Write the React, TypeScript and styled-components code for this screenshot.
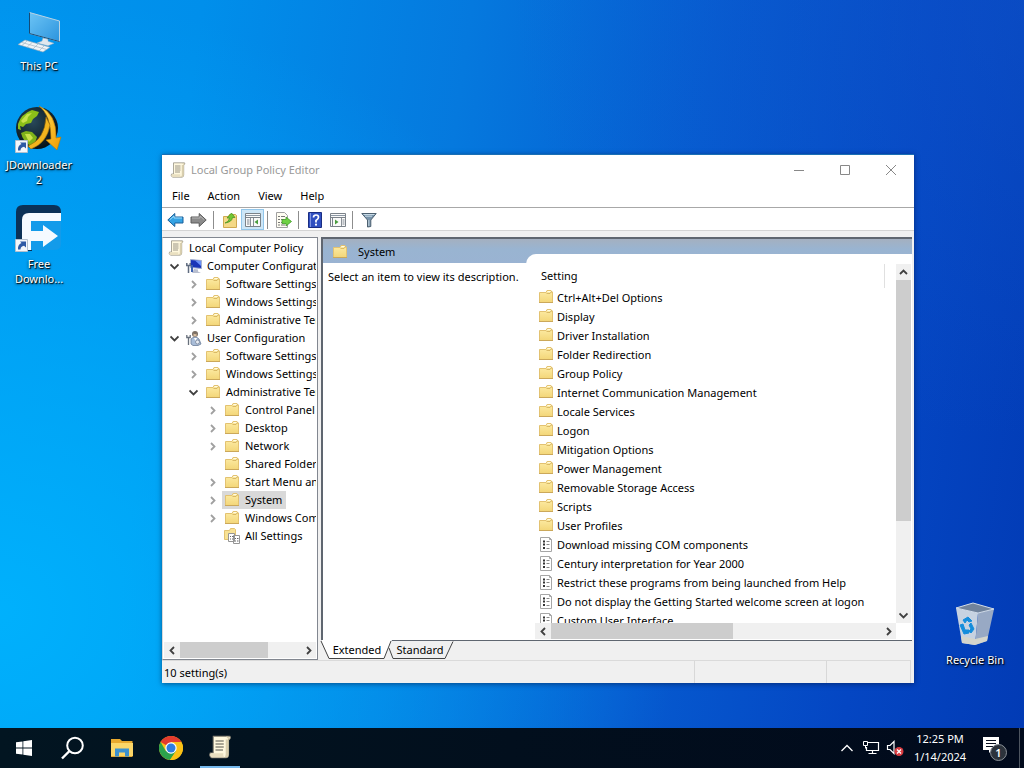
import React from "react";
import styled, { createGlobalStyle, css } from "styled-components";

const GlobalStyle = createGlobalStyle`
  * { box-sizing: border-box; }
  body { margin: 0; }
  body, button, table {
    font-family: "Noto Sans", "Open Sans", sans-serif;
    font-size: 11px;
    line-height: 18px;
    color: #000;
  }
  button { border: 0; padding: 0; margin: 0; background: none; }
  ul { list-style: none; margin: 0; padding: 0; }
  svg { display: block; flex: none; }
`;

/* ---------- desktop ---------- */

const Screen = styled.div`
  display: flex;
  flex-direction: column;
  height: 100vh;
  min-height: 480px;
  overflow: hidden;
`;

const Desktop = styled.main`
  position: relative;
  flex: 1;
  min-height: 0;
  background:
    radial-gradient(ellipse 66% 85% at 0% 84%, rgba(0, 182, 255, 0.85), rgba(0, 170, 250, 0) 100%),
    radial-gradient(ellipse 50% 60% at 100% 0%, rgba(20, 90, 205, 0.4), rgba(20, 90, 205, 0) 100%),
    linear-gradient(98deg, #0094ee 0%, #008feb 18%, #0579de 42%, #065bd0 64%, #0446c3 84%, #023bb5 100%);
`;

const Shortcuts = styled.div`
  display: flex;
  flex-direction: column;
  width: 78px;
`;

const Shortcut = styled.button`
  display: flex;
  flex-direction: column;
  align-items: center;
  gap: 4px;
  width: 78px;
  height: 99px;
  padding-top: 6px;
  color: #fff;
  line-height: 15px;
  text-shadow: 1px 1px 1px #000, 0 1px 3px rgba(0, 0, 0, 0.8);
`;

const BinSpot = styled.div`
  position: absolute;
  right: 10px;
  bottom: 35px;
`;

/* ---------- window ---------- */

const Window = styled.section`
  position: absolute;
  top: 154px;
  right: 110px;
  bottom: 45px;
  left: 162px;
  display: flex;
  flex-direction: column;
  background: #f0f0f0;
  border-top: 1px solid #1a6fb4;
  box-shadow: 0 1px 5px rgba(0, 20, 60, 0.55);
`;

const TitleBar = styled.header`
  display: flex;
  align-items: center;
  height: 30px;
  padding-left: 8px;
  background: #fff;
`;

const Title = styled.h1`
  flex: 1;
  margin: 0 0 0 5px;
  font-size: 11px;
  font-weight: 400;
  color: #999;
`;

const CaptionButton = styled.button`
  display: grid;
  place-items: center;
  width: 46px;
  height: 30px;
`;

const MenuBar = styled.nav`
  display: flex;
  gap: 18px;
  height: 23px;
  padding: 2px 10px 2px;
  background: #fff;
  border-bottom: 1px solid #a8a8a8;
`;

const ToolBar = styled.div`
  display: flex;
  align-items: flex-end;
  height: 23px;
  padding-left: 2px;
  background: #fff;
  border-bottom: 1px solid #d4d4d4;
`;

const Tool = styled.button<{ $on?: boolean }>`
  display: grid;
  place-items: center;
  width: 23px;
  height: 21px;
  padding-top: 1px;
  ${(p) => p.$on && css`
    background: #cde6f7;
    border: 1px solid #92c6ea;
  `}
`;

const ToolRule = styled.span`
  width: 1px;
  height: 18px;
  margin: 0 4px 1px 3px;
  background: #8d8d8d;
`;

const Panes = styled.div`
  display: grid;
  grid-template-columns: 156px minmax(0, 1fr);
  gap: 3px;
  flex: 1;
  min-height: 0;
  padding: 6px 2px 0 0;
`;

const TreePane = styled.div`
  display: flex;
  flex-direction: column;
  min-height: 0;
  padding: 0 1px 1px;
  background: #fff;
  border: 1px solid #828790;
  border-left-color: #d8d8d8;
`;

const Tree = styled.ul`
  flex: 1;
  min-height: 0;
  overflow: hidden;
  padding-top: 1px;
`;

const Branch = styled.li<{ $depth: number }>`
  display: flex;
  align-items: center;
  height: 18px;
  padding-left: ${(p) => Math.max(0, p.$depth * 19 - 17)}px;
  white-space: nowrap;
`;

const Twisty = styled.span`
  display: grid;
  flex: none;
  place-items: center;
  width: 16px;
  height: 18px;
`;

const Node = styled.button<{ $selected?: boolean }>`
  display: flex;
  flex: none;
  align-items: center;
  gap: 5px;
  height: 18px;
  margin-left: 2px;
  padding: 0 4px 0 2px;
  white-space: nowrap;
  background: ${(p) => (p.$selected ? "#d9d9d9" : "transparent")};
`;

const RightSide = styled.div`
  display: flex;
  flex-direction: column;
  min-width: 0;
  min-height: 0;
`;

const ResultPane = styled.div`
  display: grid;
  grid-template-columns: 203px minmax(0, 1fr);
  flex: 1;
  min-height: 0;
  border: solid #5f6670;
  border-width: 2px 0 1px 2px;
  background: linear-gradient(#a4b0c0, #99b4d1 10px, #9ab3d2) top / 100% 24px no-repeat #fff;
`;

const Heading = styled.h2`
  display: flex;
  align-items: center;
  gap: 10px;
  height: 24px;
  margin: 0;
  padding: 2px 0 0 9px;
  font-size: 11px;
  font-weight: 400;
`;

const Hint = styled.p`
  margin: 5px 0 0 5px;
  white-space: nowrap;
`;

const Sheet = styled.div`
  display: grid;
  grid-template-columns: minmax(0, 1fr) 15px;
  grid-template-rows: minmax(0, 1fr) 16px;
  min-height: 0;
  margin-top: 15px;
  padding: 10px 1px 1px 9px;
  border-top-left-radius: 10px;
  background: #fff;
`;

const ListView = styled.div`
  overflow: hidden;
  margin-right: 2px;
`;

const Settings = styled.table`
  width: 100%;
  border-collapse: collapse;
  white-space: nowrap;

  th {
    height: 24px;
    padding: 0 0 0 6px;
    font-weight: 400;
    text-align: left;
  }
  td { height: 19px; padding: 0 0 0 3px; }
`;

const HeaderCell = styled.div`
  height: 24px;
  margin-right: 9px;
  padding-top: 3px;
  border-right: 1px solid #e0e0e0;
`;

const SettingName = styled.div`
  display: flex;
  align-items: center;
  gap: 3px;
  height: 19px;

  svg { margin-bottom: 1px; }
`;

/* ---------- scroll bars ---------- */

const Bar = styled.div<{ $vertical?: boolean }>`
  display: flex;
  flex: none;
  flex-direction: ${(p) => (p.$vertical ? "column" : "row")};
  align-items: stretch;
  min-width: 0;
  min-height: 0;
  ${(p) => !p.$vertical && "height: 16px;"}
  background: #f0f0f0;
`;

const BarButton = styled.button`
  display: grid;
  place-items: center;
  min-width: 15px;
  width: auto;
  flex: 0 0 16px;
`;

const Thumb = styled.div<{ $share: number }>`
  flex: ${(p) => p.$share} 0 0;
  background: #cdcdcd;
`;

const Track = styled.div<{ $share: number }>`
  flex: ${(p) => p.$share} 0 0;
`;

/* ---------- tabs and status ---------- */

const Tabs = styled.div`
  display: flex;
  height: 19px;
`;

const Tab = styled.button<{ $active?: boolean }>`
  position: relative;
  width: ${(p) => (p.$active ? 70 : 64)}px;
  height: 18px;
  padding-left: ${(p) => (p.$active ? 2 : 0)}px;
  padding-right: ${(p) => (p.$active ? 0 : 6)}px;
  line-height: 18px;
  text-align: center;

  svg { position: absolute; top: 0; left: 0; overflow: visible; }
  span { position: relative; }
`;

const StatusBar = styled.footer`
  display: grid;
  grid-template-columns: minmax(0, 1fr) 132px 84px;
  height: 23px;
  margin-right: 3px;
  border-top: 1px solid #dadada;

  > * {
    padding: 3px 0 0 2px;
    border-right: 1px solid #d8d8d8;
  }
`;

/* ---------- task bar ---------- */

const TaskBar = styled.footer`
  display: flex;
  flex: none;
  gap: 1px;
  height: 40px;
  background: linear-gradient(90deg, #021521, #020f1d 50%, #010a1c);
`;

const TaskButton = styled.button<{ $open?: boolean }>`
  display: grid;
  place-items: center;
  width: ${(p) => (p.$open ? 40 : 48)}px;
  height: 40px;
  margin: ${(p) => (p.$open ? "0 4px" : "0")};
  border-bottom: ${(p) => (p.$open ? "2px solid #76b9ed" : "0")};
`;

const TaskSpacer = styled.div`
  flex: 1;
`;

const Tray = styled.div`
  display: flex;
`;

const TrayButton = styled.button`
  display: grid;
  place-items: center;
  width: 24px;
  height: 40px;
`;

const Clock = styled.button`
  width: 66px;
  height: 40px;
  color: #fff;
  text-align: center;
  line-height: 18px;
`;

const Notice = styled(TrayButton)`
  width: 47px;
  border-right: 1px solid #4d5560;
  margin-right: 4px;
`;

/* ---------- drawings ---------- */

const Folder = () => (
  <svg width="16" height="16" viewBox="0 0 16 16">
    <defs>
      <linearGradient id="manila" x1="0" y1="0" x2="0" y2="1">
        <stop offset="0" stopColor="#fdeca6" /><stop offset="1" stopColor="#f3d678" />
      </linearGradient>
    </defs>
    <path d="M1.500 3.500h6.500l1-2h4l1 1.500h.5v10.500h-13z" fill="url(#manila)" stroke="#e3c271" />
    <path d="M8.500 4.500h3.500l1-1.500h1" stroke="#cba650" strokeWidth=".7" fill="none" />
    <path d="M9.500 2.500h3" stroke="#fffbe6" />
    <path d="M1 13.500h14" stroke="#cba85a" />
  </svg>
);

const Scroll = ({ size = 16 }: { size?: number }) => (
  <svg width={size} height={size} viewBox="0 0 16 16">
    <path d="M3.500.8h11q1.200 1.400-.8 2.200V13q0 2-1.700 2.200H2.500Q.5 14 1.500 12h2z" fill="#fff8de" stroke="#8a8577" strokeWidth=".7" />
    <path d="M12 1q3-.2 2.500 2h-2.700v10q0 1.800-1.500 2h2q1.500-.3 1.500-2V3" fill="#d9cfae" />
    <path d="M1.800 12.200h8.500q-.5 2.300 1 2.800H2.500Q1 14 1.800 12.200z" fill="#e9dfc0" />
    <path d="M5 4h5.500M5 6h5.500M5 8h5.500M5 10h5" stroke="#8f8a7e" strokeWidth=".9" />
  </svg>
);

const Page = () => (
  <svg width="16" height="16" viewBox="0 0 16 16">
    <path d="M2.500 1.500h9l2 2v12h-11z" fill="#fff" stroke="#a6a6a6" />
    <path d="M11.500 1.500v2h2" fill="none" stroke="#a6a6a6" />
    <path d="M5 5.500h2M5 8.500h2M5 12h2" stroke="#333" strokeWidth="2" />
    <path d="M8.500 5.500h3M8.500 8.500h3M8.500 12.500h3" stroke="#888" />
  </svg>
);

const AllSettings = () => (
  <svg width="16" height="16" viewBox="0 0 16 16">
    <path d="M.5 2.500h5l1-2h4l1 1v10h-11z" fill="#f8e294" stroke="#e3c271" />
    <path d="M4.500 5.500h6v8h-6zM9.500 7.500h6v8h-6z" fill="#fff" stroke="#959595" />
    <path d="M11 10.500h1M13 10.500h1.500M11 13h1M13 13h1.500M6 8.500h1M8 8.500h1.500M6 11h1M8 11h1" stroke="#666" />
  </svg>
);

const ComputerNode = () => (
  <svg width="16" height="16" viewBox="0 0 16 16">
    <path d="M4.500 1.500l11 1v8l-11-1z" fill="#1a35b8" stroke="#a5b0d0" />
    <path d="M9 2.500l6 .5v5z" fill="#6b91f8" />
    <path d="M8 11l4 .5v2l3 1.500H6z" fill="#b9bfd0" />
    <path d="M2.500 7v8M.8 5v2.500h3.400V5" stroke="#606c80" strokeWidth="1.500" fill="none" />
    <path d="M6 7v7" stroke="#3d62b2" strokeWidth="2" />
  </svg>
);

const UserNode = () => (
  <svg width="16" height="16" viewBox="0 0 16 16">
    <circle cx="9" cy="4" r="3" fill="#7b6f64" />
    <path d="M7.500 3.500q2 1.500 3 0v3h-3z" fill="#dbc0a0" />
    <path d="M5 14V9q4-4 8 0l2 5-3 1.500H7z" fill="#a9bdd8" stroke="#6c7d99" strokeWidth=".8" />
    <path d="M8 8l1.500 3L11 8" fill="#fff" />
    <path d="M2.500 7v8M.8 5v2.500h3.400V5" stroke="#68707c" strokeWidth="1.300" fill="none" />
    <circle cx="11.500" cy="12" r="2" fill="#e8edf5" stroke="#7b8799" strokeWidth=".8" />
  </svg>
);

const arrows = {
  left: "M6 1L2.500 4.500L6 8",
  right: "M3 1l3.500 3.500L3 8",
  up: "M1 6l3.500-3.500L8 6",
  down: "M.5 2.500l4 4 4-4",
};

const Chevron = ({ to, color = "#404040" }: { to: keyof typeof arrows; color?: string }) => (
  <svg width="9" height="9" viewBox="0 0 9 9">
    <path d={arrows[to]} fill="none" stroke={color} strokeWidth="1.800" />
  </svg>
);

const Arrow = ({ back }: { back?: boolean }) => (
  <svg width="17" height="16" viewBox="0 0 17 16">
    {back ? (
      <path d="M.8 8l7-6.500V5H16v6H7.800v3.500z" fill="#35a3e4" stroke="#1b5f99" />
    ) : (
      <path d="M16.200 8l-7-6.500V5H1v6h8.200v3.500z" fill="#8b8b8b" stroke="#5a5a5a" />
    )}
    <path d={back ? "M3 7.500l4-3.500v2h8" : "M14 7.500L10 4v2H2"} fill="none" stroke={back ? "#9edcfb" : "#b5b5b5"} />
  </svg>
);

const UpFolder = () => (
  <svg width="16" height="16" viewBox="0 0 16 16">
    <path d="M1.500 4.500h5l1-2h6l1 1v12h-13z" fill="#f4d987" stroke="#cfa951" />
    <path d="M3 11q4-1 4.500-5H5l4.500-5L13 5.500h-2.500Q10 10 3 11z" fill="#72c732" stroke="#3f8f1d" strokeWidth=".7" />
  </svg>
);

const Panel = ({ right }: { right?: boolean }) => (
  <svg width="16" height="16" viewBox="0 0 16 16">
    <path d="M.5 1.500h15v13H.5z" fill="#fafafa" stroke="#7b8289" />
    <path d="M1 3.500h14" stroke="#8c98a4" />
    <path d="M1 5.500h14" stroke="#7b8289" />
    <path d={right ? "M11.500 6v8" : "M5.500 6v8M8.500 6v8"} stroke="#8b9299" />
    <path d={right ? "M5 7.500l3.500 2.500L5 12.500z" : "M13 7.500L9.500 10l3.500 2.500z"} fill="#4b9d3f" />
    <path d={right ? "M12.500 8h2M12.500 10h2M12.500 12h2M2.500 6v8" : "M2 8h2.500M2 10h2.500M2 12h2.500"} stroke="#7c858e" />
  </svg>
);

const Export = () => (
  <svg width="17" height="16" viewBox="0 0 17 16">
    <path d="M1.500.5h8l3 3v12h-11z" fill="#fffdf2" stroke="#a0a0a0" />
    <path d="M3 4.500h2M6 4.500h4M3 7.500h2M6 7.500h3M3 10.500h2M6 10.500h2M3 13h2M6 13h4" stroke="#777" />
    <path d="M7 7.500h4V5l5.500 4.500L11 14v-2.500H7z" fill="#6fd143" stroke="#43992a" strokeWidth=".8" />
  </svg>
);

const Help = () => (
  <svg width="14" height="16" viewBox="0 0 14 16">
    <path d="M.5.5h13v15H.5z" fill="#2f4fc0" stroke="#1a2d82" />
    <path d="M2.500 1v14" stroke="#7d93e2" />
    <path d="M5.500 5.500Q5.500 3 8 3t2.500 2.300Q10.500 7 8 8.500V10.500" fill="none" stroke="#fff" strokeWidth="1.700" />
    <circle cx="8" cy="12.700" r="1.100" fill="#fff" />
  </svg>
);

const Funnel = () => (
  <svg width="16" height="16" viewBox="0 0 16 16">
    <path d="M.8 1.500h14.400L9.800 8v6.500L6.500 15V8z" fill="#7894ab" stroke="#4c6070" />
    <path d="M2.500 2.500h11M4 4.200h7" stroke="#c8dae6" />
    <path d="M7.800 8v6" stroke="#c0d0db" />
  </svg>
);

const ShortcutMark = () => (
  <>
    <path d="M.5 35.500h12v12H.5z" fill="#f4f7fb" stroke="#b3c0ce" />
    <path d="M3 45.500q-.5-5 3.500-6.500L5 37.500h6v6L9 41.700q-3.500.5-3.500 3.800z" fill="#2e5aa5" />
  </>
);

const ThisPC = () => (
  <svg width="48" height="48" viewBox="0 0 48 48">
    <defs>
      <linearGradient id="glass" x1="0" y1="0" x2="1" y2="1">
        <stop offset="0" stopColor="#6cc4f5" /><stop offset="1" stopColor="#2c94de" />
      </linearGradient>
    </defs>
    <path d="M14.500 6.500l30 8.500V35.500L14.500 27.500z" fill="url(#glass)" stroke="#b9d3e4" />
    <path d="M14.500 6.500v21l30 8" fill="none" stroke="#134b78" strokeWidth="1" />
    <path d="M28 32l5 1.300v2l6 2-6 2.500-11-2.700 5-2z" fill="#e0e8ee" stroke="#98afc0" strokeWidth=".5" />
    <path d="M10 34l25 7.300L28 46 3 38.500z" fill="#eff4f7" stroke="#8ba5b8" strokeWidth=".6" />
    <path d="M7 36.500l24 6.800M12 35l-5 4.500M17 36.500l-5 4.800M23 38l-5 5M29 40l-5 5" stroke="#a4b6c4" strokeWidth=".7" />
  </svg>
);

const JDownloader = () => (
  <svg width="48" height="48" viewBox="0 0 48 48">
    <defs>
      <radialGradient id="globe" cx=".4" cy=".35" r=".7">
        <stop offset="0" stopColor="#28485a" /><stop offset="1" stopColor="#050f14" />
      </radialGradient>
      <linearGradient id="gold" x1="0" y1="0" x2="1" y2="1">
        <stop offset="0" stopColor="#ffe15a" /><stop offset="1" stopColor="#f09a00" />
      </linearGradient>
    </defs>
    <circle cx="22" cy="23" r="21" fill="url(#globe)" />
    <path d="M3 19Q6 9 17 5l7 2-2 4-4 3-2 4-5 1-3 3-3-1 1 4-3-1z" fill="#8cbf19" />
    <path d="M6 28l5-2 6 1 5 5-2 6-4 3Q8 37 6 28z" fill="#7fb31a" />
    <path d="M6 16l6-7 5-1-4 4-1 4-4 2zM10 29l5 0 3 4-4 4z" fill="#c9e24a" />
    <path d="M24 1Q36 10 36 34l-5 1 11 10 4-13-5 1Q42 9 24 1z" fill="url(#gold)" stroke="#b87800" strokeWidth=".6" />
    <path d="M31 12Q30 34 13 41l3 3Q32 38 35 20z" fill="#f2b51e" stroke="#9d6b06" strokeWidth=".6" />
    <ShortcutMark />
  </svg>
);

const FreeDownload = () => (
  <svg width="48" height="48" viewBox="0 0 48 48">
    <path d="M8 1h31q7 0 7 7v3H22q-5 0-5 5v31H1V8q0-7 7-7z" fill="#0b3157" />
    <path d="M16 15h30v25q0 6-7 6H16z" fill="#139bea" />
    <path d="M7 46V16q0-7 7-7h32v8H16v10h12v-6l15 11-15 11v-6H16v9z" fill="#f5faff" />
    <ShortcutMark />
  </svg>
);

const Bin = () => (
  <svg width="48" height="48" viewBox="0 0 48 48">
    <path d="M5 8L27 13 24 45 11 43z" fill="#c6d2e1" />
    <path d="M27 13L43 9 36 41 24 45z" fill="#98a9c4" />
    <path d="M5 8L22 3 43 9 27 13z" fill="#71839b" stroke="#d5dee8" />
    <path d="M10 36l14 3 13-3-1 5-12 4-13-2z" fill="#d4d5cc" />
    <path d="M12 20l5-3 4 4-3 1-2-2-2 3zM9 25l3-1 2 6h4v3l-5 1zM20 23l3 6-3 4-2-2 2-2-2-4z" fill="#148ddc" stroke="#148ddc" />
  </svg>
);

const WindowsLogo = () => (
  <svg width="16" height="16" viewBox="0 0 16 16">
    <path d="M0 2.300l6.500-.9v6.200H0zM7.300 1.300L16 0v7.600H7.300zM0 8.400h6.500v6.200L0 13.700zM7.300 8.400H16V16l-8.700-1.300z" fill="#fff" />
  </svg>
);

const Magnifier = () => (
  <svg width="24" height="24" viewBox="0 0 24 24">
    <circle cx="14" cy="9.500" r="7.800" fill="none" stroke="#fff" strokeWidth="2" />
    <path d="M8.500 15L1 22.500" stroke="#fff" strokeWidth="2.400" />
  </svg>
);

const Explorer = () => (
  <svg width="22" height="20" viewBox="0 0 22 20">
    <path d="M0 1h9l2 2h10.500v16H0z" fill="#e8a92e" />
    <path d="M0 5h22v13H0z" fill="#fbd668" />
    <path d="M4 10.500h14v8h-4v-4H8v4H4z" fill="#3c91cf" />
  </svg>
);

const Chrome = () => (
  <svg width="24" height="24" viewBox="0 0 24 24">
    <circle cx="12" cy="12" r="12" fill="#fbc116" />
    <path d="M12 12L1.600 6A12 12 0 0 1 22.400 6H12z" fill="#e33b2e" />
    <path d="M1.600 6A12 12 0 0 0 11 24l6.200-9-5.200-3L6.800 15z" fill="#2ca24c" />
    <path d="M12 6.500h10.600A12 12 0 0 1 11 24l6-9z" fill="#fbc116" />
    <circle cx="12" cy="12" r="5.700" fill="#fff" />
    <circle cx="12" cy="12" r="4.500" fill="#2f7de1" />
  </svg>
);

const NetworkGlyph = () => (
  <svg width="18" height="16" viewBox="0 0 18 16">
    <path d="M6 2.500h10.500v8H4.500V7M10.500 10.500v3M6.500 13.500h8" fill="none" stroke="#fff" strokeWidth="1.200" />
    <path d="M1.500 1.500h4v4h-4zM3.500 5.500v3" fill="none" stroke="#fff" />
  </svg>
);

const MutedGlyph = () => (
  <svg width="18" height="18" viewBox="0 0 18 18">
    <path d="M1.500 6.500h2.500l4-4v12l-4-4H1.500z" fill="none" stroke="#fff" strokeWidth="1.200" />
    <circle cx="13" cy="12.500" r="4.500" fill="#d83b40" />
    <path d="M11 10.500l4 4M15 10.500l-4 4" stroke="#fff" strokeWidth="1.300" />
  </svg>
);

const NoticeGlyph = () => (
  <svg width="26" height="26" viewBox="0 0 26 26">
    <path d="M0 2h16v13H9l-3 3v-3H0z" fill="#fff" />
    <path d="M3 5.500h10M3 8.500h10M3 11.500h7" stroke="#08101f" strokeWidth="1.200" />
    <circle cx="15.500" cy="17.500" r="8" fill="#2c333c" stroke="#8a9097" />
    <text x="15.500" y="21.500" textAnchor="middle" fill="#fff" fontSize="11" fontWeight="600">1</text>
  </svg>
);

/* ---------- data ---------- */

type TreeItem = {
  name: string;
  depth: number;
  open?: boolean;
  leaf?: boolean;
  selected?: boolean;
  icon?: React.ReactNode;
};

const tree: TreeItem[] = [
  { name: "Computer Configuration", depth: 1, open: true, icon: <ComputerNode /> },
  { name: "Software Settings", depth: 2 },
  { name: "Windows Settings", depth: 2 },
  { name: "Administrative Templates", depth: 2 },
  { name: "User Configuration", depth: 1, open: true, icon: <UserNode /> },
  { name: "Software Settings", depth: 2 },
  { name: "Windows Settings", depth: 2 },
  { name: "Administrative Templates", depth: 2, open: true },
  { name: "Control Panel", depth: 3 },
  { name: "Desktop", depth: 3 },
  { name: "Network", depth: 3 },
  { name: "Shared Folders", depth: 3, leaf: true },
  { name: "Start Menu and Taskbar", depth: 3 },
  { name: "System", depth: 3, selected: true },
  { name: "Windows Components", depth: 3 },
  { name: "All Settings", depth: 3, leaf: true, icon: <AllSettings /> },
];

const folders = [
  "Ctrl+Alt+Del Options",
  "Display",
  "Driver Installation",
  "Folder Redirection",
  "Group Policy",
  "Internet Communication Management",
  "Locale Services",
  "Logon",
  "Mitigation Options",
  "Power Management",
  "Removable Storage Access",
  "Scripts",
  "User Profiles",
];

const policies = [
  "Download missing COM components",
  "Century interpretation for Year 2000",
  "Restrict these programs from being launched from Help",
  "Do not display the Getting Started welcome screen at logon",
  "Custom User Interface",
];

const TreeList = () => (
  <Tree>
    <Branch $depth={0}>
      <Node><Scroll />Local Computer Policy</Node>
    </Branch>
    {tree.map((item, i) => (
      <Branch key={i} $depth={item.depth}>
        <Twisty>
          {!item.leaf && <Chevron to={item.open ? "down" : "right"} color={item.open ? "#404040" : "#a0a0a0"} />}
        </Twisty>
        <Node $selected={item.selected}>{item.icon ?? <Folder />}{item.name}</Node>
      </Branch>
    ))}
  </Tree>
);

const ScrollBar = ({ vertical, thumb, rest }: { vertical?: boolean; thumb: number; rest: number }) => (
  <Bar $vertical={vertical}>
    <BarButton aria-label={vertical ? "Scroll up" : "Scroll left"}><Chevron to={vertical ? "up" : "left"} /></BarButton>
    <Thumb $share={thumb} />
    <Track $share={rest} />
    <BarButton aria-label={vertical ? "Scroll down" : "Scroll right"}><Chevron to={vertical ? "down" : "right"} /></BarButton>
  </Bar>
);

export default function App() {
  return (
    <Screen>
      <GlobalStyle />
      <Desktop>
        <Shortcuts>
          <Shortcut><ThisPC />This PC</Shortcut>
          <Shortcut><JDownloader /><span>JDownloader<br />2</span></Shortcut>
          <Shortcut><FreeDownload /><span>Free<br />Downlo...</span></Shortcut>
        </Shortcuts>
        <BinSpot>
          <Shortcut><Bin />Recycle Bin</Shortcut>
        </BinSpot>

        <Window>
          <TitleBar>
            <Scroll />
            <Title>Local Group Policy Editor</Title>
            <CaptionButton aria-label="Minimize">
              <svg width="10" height="10"><path d="M0 5.500h10" stroke="#888" /></svg>
            </CaptionButton>
            <CaptionButton aria-label="Maximize">
              <svg width="10" height="10"><path d="M.5.5h9v9h-9z" fill="none" stroke="#888" /></svg>
            </CaptionButton>
            <CaptionButton aria-label="Close">
              <svg width="10" height="10"><path d="M0 0l10 10M10 0L0 10" stroke="#888" /></svg>
            </CaptionButton>
          </TitleBar>
          <MenuBar>
            <button>File</button>
            <button>Action</button>
            <button>View</button>
            <button>Help</button>
          </MenuBar>
          <ToolBar>
            <Tool aria-label="Back"><Arrow back /></Tool>
            <Tool aria-label="Forward"><Arrow /></Tool>
            <ToolRule />
            <Tool aria-label="Up one level"><UpFolder /></Tool>
            <Tool $on aria-label="Show or hide console tree"><Panel /></Tool>
            <ToolRule />
            <Tool aria-label="Export list"><Export /></Tool>
            <ToolRule />
            <Tool aria-label="Help"><Help /></Tool>
            <Tool aria-label="Show or hide action pane"><Panel right /></Tool>
            <ToolRule />
            <Tool aria-label="Filter"><Funnel /></Tool>
          </ToolBar>

          <Panes>
            <TreePane>
              <TreeList />
              <ScrollBar thumb={88} rest={32} />
            </TreePane>
            <RightSide>
              <ResultPane>
                <div>
                  <Heading><Folder />System</Heading>
                  <Hint>Select an item to view its description.</Hint>
                </div>
                <Sheet>
                  <ListView>
                    <Settings>
                      <thead>
                        <tr><th scope="col"><HeaderCell>Setting</HeaderCell></th></tr>
                      </thead>
                      <tbody>
                        {folders.map((name) => (
                          <tr key={name}><td><SettingName><Folder />{name}</SettingName></td></tr>
                        ))}
                        {policies.map((name) => (
                          <tr key={name}><td><SettingName><Page />{name}</SettingName></td></tr>
                        ))}
                      </tbody>
                    </Settings>
                  </ListView>
                  <ScrollBar vertical thumb={240} rest={86} />
                  <ScrollBar thumb={181} rest={146} />
                </Sheet>
              </ResultPane>
              <Tabs>
                <Tab $active>
                  <svg width="70" height="18">
                    <path d="M0-1l8 18h55l8-18z" fill="#fff" />
                    <path d="M0 0l8 17.500h55l7-17.500" fill="none" stroke="#444" />
                  </svg>
                  <span>Extended</span>
                </Tab>
                <Tab>
                  <svg width="64" height="18">
                    <path d="M-2 7l4 10.500h52l8-17" fill="none" stroke="#444" />
                  </svg>
                  <span>Standard</span>
                </Tab>
              </Tabs>
            </RightSide>
          </Panes>
          <StatusBar>
            <span>10 setting(s)</span>
            <span />
            <span />
          </StatusBar>
        </Window>
      </Desktop>

      <TaskBar>
        <TaskButton aria-label="Start"><WindowsLogo /></TaskButton>
        <TaskButton aria-label="Search"><Magnifier /></TaskButton>
        <TaskButton aria-label="File Explorer"><Explorer /></TaskButton>
        <TaskButton aria-label="Google Chrome"><Chrome /></TaskButton>
        <TaskButton $open aria-label="Local Group Policy Editor"><Scroll size={24} /></TaskButton>
        <TaskSpacer />
        <Tray>
          <TrayButton aria-label="Show hidden icons">
            <svg width="12" height="8"><path d="M.5 7L6 1.500 11.500 7" fill="none" stroke="#fff" strokeWidth="1.300" /></svg>
          </TrayButton>
          <TrayButton aria-label="Network"><NetworkGlyph /></TrayButton>
          <TrayButton aria-label="Volume muted"><MutedGlyph /></TrayButton>
          <Clock>12:25 PM<br />1/14/2024</Clock>
          <Notice aria-label="Notifications"><NoticeGlyph /></Notice>
        </Tray>
      </TaskBar>
    </Screen>
  );
}
